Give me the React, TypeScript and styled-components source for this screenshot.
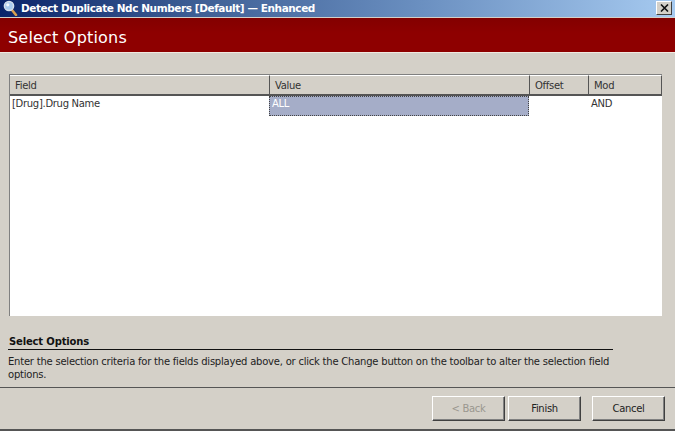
import { createGlobalStyle, styled } from 'styled-components';

const GlobalStyle = createGlobalStyle`
  html, body {
    margin: 0;
    padding: 0;
    background: #d4d0c8;
  }
  body {
    font-family: 'DejaVu Sans', Tahoma, sans-serif;
    font-size: 10px;
    letter-spacing: -0.3px;
    color: #1a1a1a;
  }
`;

const Dialog = styled.div`
  width: 675px;
  height: 431px;
  display: flex;
  flex-direction: column;
  overflow: hidden;
  background: #d4d0c8;
  border-bottom: 2px solid #555;
  box-sizing: border-box;
`;

const TitleBar = styled.div`
  height: 18px;
  flex: none;
  display: flex;
  align-items: center;
  gap: 3px;
  padding: 0 3px 1px 3px;
  box-sizing: border-box;
  background: linear-gradient(90deg, #0a246a 0%, #3f6096 30%, #6a8fc0 62%, #a6caf0 100%);
  border-bottom: 1px solid #d4d0c8;
`;

const TitleText = styled.span`
  flex: 1;
  color: #fff;
  font-weight: bold;
  font-size: 10.5px;
  letter-spacing: -0.42px;
  white-space: nowrap;
`;

const CloseButton = styled.div`
  width: 16px;
  height: 14px;
  flex: none;
  display: flex;
  align-items: center;
  justify-content: center;
  background: #d4d0c8;
  box-sizing: border-box;
  border: 1px solid;
  border-color: #fff #404040 #404040 #fff;
`;

const Banner = styled.div`
  height: 35px;
  flex: none;
  display: flex;
  align-items: center;
  padding: 4px 8px 0;
  box-sizing: border-box;
  background: linear-gradient(180deg, #830000 0%, #8e0000 45%);
  border-bottom: 1px solid #f0e8e0;
  color: #fff;
  font-size: 16px;
  letter-spacing: 0.2px;
`;

const Table = styled.div`
  margin: 21px 13px 0 9px;
  height: 242px;
  flex: none;
  display: flex;
  flex-direction: column;
  background: #fff;
  box-sizing: border-box;
  border-left: 1px solid #808080;
  border-top: 1px solid #808080;
`;

const Columns = `
  display: grid;
  grid-template-columns: 260px 260px 59px 73px;
`;

const HeaderRow = styled.div`
  ${Columns}
  height: 19px;
  flex: none;
  background: #d4d0c8;
  border-bottom: 2px solid #555;
`;

const HeaderCell = styled.div`
  display: flex;
  align-items: center;
  padding-left: 5px;
  box-sizing: border-box;
  border-top: 1px solid #fff;
  border-right: 1px solid #555;
  color: #333;
`;

const DataRow = styled.div`
  ${Columns}
  height: 20px;
  flex: none;
`;

const DataCell = styled.div<{ $selected?: boolean; $inset?: number }>`
  display: flex;
  align-items: center;
  height: 20px;
  margin-left: ${(p) => (p.$selected ? -1 : 0)}px;
  margin-right: ${(p) => (p.$selected ? 1 : 0)}px;
  padding-left: ${(p) => p.$inset ?? 2}px;
  padding-bottom: 5px;
  box-sizing: border-box;
  color: ${(p) => (p.$selected ? '#fff' : '#333')};
  background: ${(p) => (p.$selected ? '#a5adc8' : 'transparent')};
  border: ${(p) => (p.$selected ? '1px dotted #444' : 'none')};
`;

const Help = styled.div`
  margin: 18px 62px 0 8px;
  flex: none;
`;

const HelpTitle = styled.div`
  font-weight: bold;
  color: #111;
  height: 15px;
  line-height: 15px;
  letter-spacing: -0.15px;
  border-bottom: 1px solid #111;
  padding-left: 1px;
`;

const HelpText = styled.div`
  margin-top: 5px;
  line-height: 13px;
  letter-spacing: -0.22px;
  color: #222;
`;

const Footer = styled.div`
  margin-top: 6px;
  flex: 1;
  display: flex;
  justify-content: flex-end;
  align-items: flex-start;
  padding: 8px 10px 0 0;
  border-top: 1px solid #555;
`;

const WizardButton = styled.div<{ $disabled?: boolean; $gap?: number }>`
  width: 73px;
  height: 25px;
  margin-left: ${(p) => p.$gap ?? 0}px;
  display: flex;
  align-items: center;
  justify-content: center;
  box-sizing: border-box;
  font-size: 10px;
  color: ${(p) => (p.$disabled ? '#9a978f' : '#222')};
  border: 1px solid;
  border-color: #fff #404040 #404040 #fff;
  box-shadow: inset -1px -1px 0 #808080;
`;

function MagnifierIcon() {
  return (
    <svg width="15" height="16" viewBox="0 0 15 16">
      <path d="M9 10l4 5" stroke="#d8a050" strokeWidth="2.6" strokeLinecap="round" />
      <circle cx="6" cy="6" r="4.6" fill="#a9cbee" stroke="#d4dfec" strokeWidth="1.5" />
      <circle cx="4.8" cy="4.8" r="1.6" fill="#f2f8ff" />
    </svg>
  );
}

function CloseIcon() {
  return (
    <svg width="9" height="8" viewBox="0 0 9 8">
      <path d="M1 0.5l7 7M8 0.5l-7 7" stroke="#111" strokeWidth="1.6" />
    </svg>
  );
}

export default function App() {
  return (
    <>
      <GlobalStyle />
      <Dialog>
        <TitleBar>
          <MagnifierIcon />
          <TitleText>Detect Duplicate Ndc Numbers [Default] — Enhanced</TitleText>
          <CloseButton>
            <CloseIcon />
          </CloseButton>
        </TitleBar>
        <Banner>Select Options</Banner>
        <Table>
          <HeaderRow>
            <HeaderCell>Field</HeaderCell>
            <HeaderCell>Value</HeaderCell>
            <HeaderCell>Offset</HeaderCell>
            <HeaderCell>Mod</HeaderCell>
          </HeaderRow>
          <DataRow>
            <DataCell>[Drug].Drug Name</DataCell>
            <DataCell $selected $inset={2}>ALL</DataCell>
            <DataCell />
            <DataCell>AND</DataCell>
          </DataRow>
        </Table>
        <Help>
          <HelpTitle>Select Options</HelpTitle>
          <HelpText>
            Enter the selection criteria for the fields displayed above, or click the Change button on the toolbar to alter the selection field options.
          </HelpText>
        </Help>
        <Footer>
          <WizardButton $disabled>&lt; Back</WizardButton>
          <WizardButton $gap={3}>Finish</WizardButton>
          <WizardButton $gap={11}>Cancel</WizardButton>
        </Footer>
      </Dialog>
    </>
  );
}
